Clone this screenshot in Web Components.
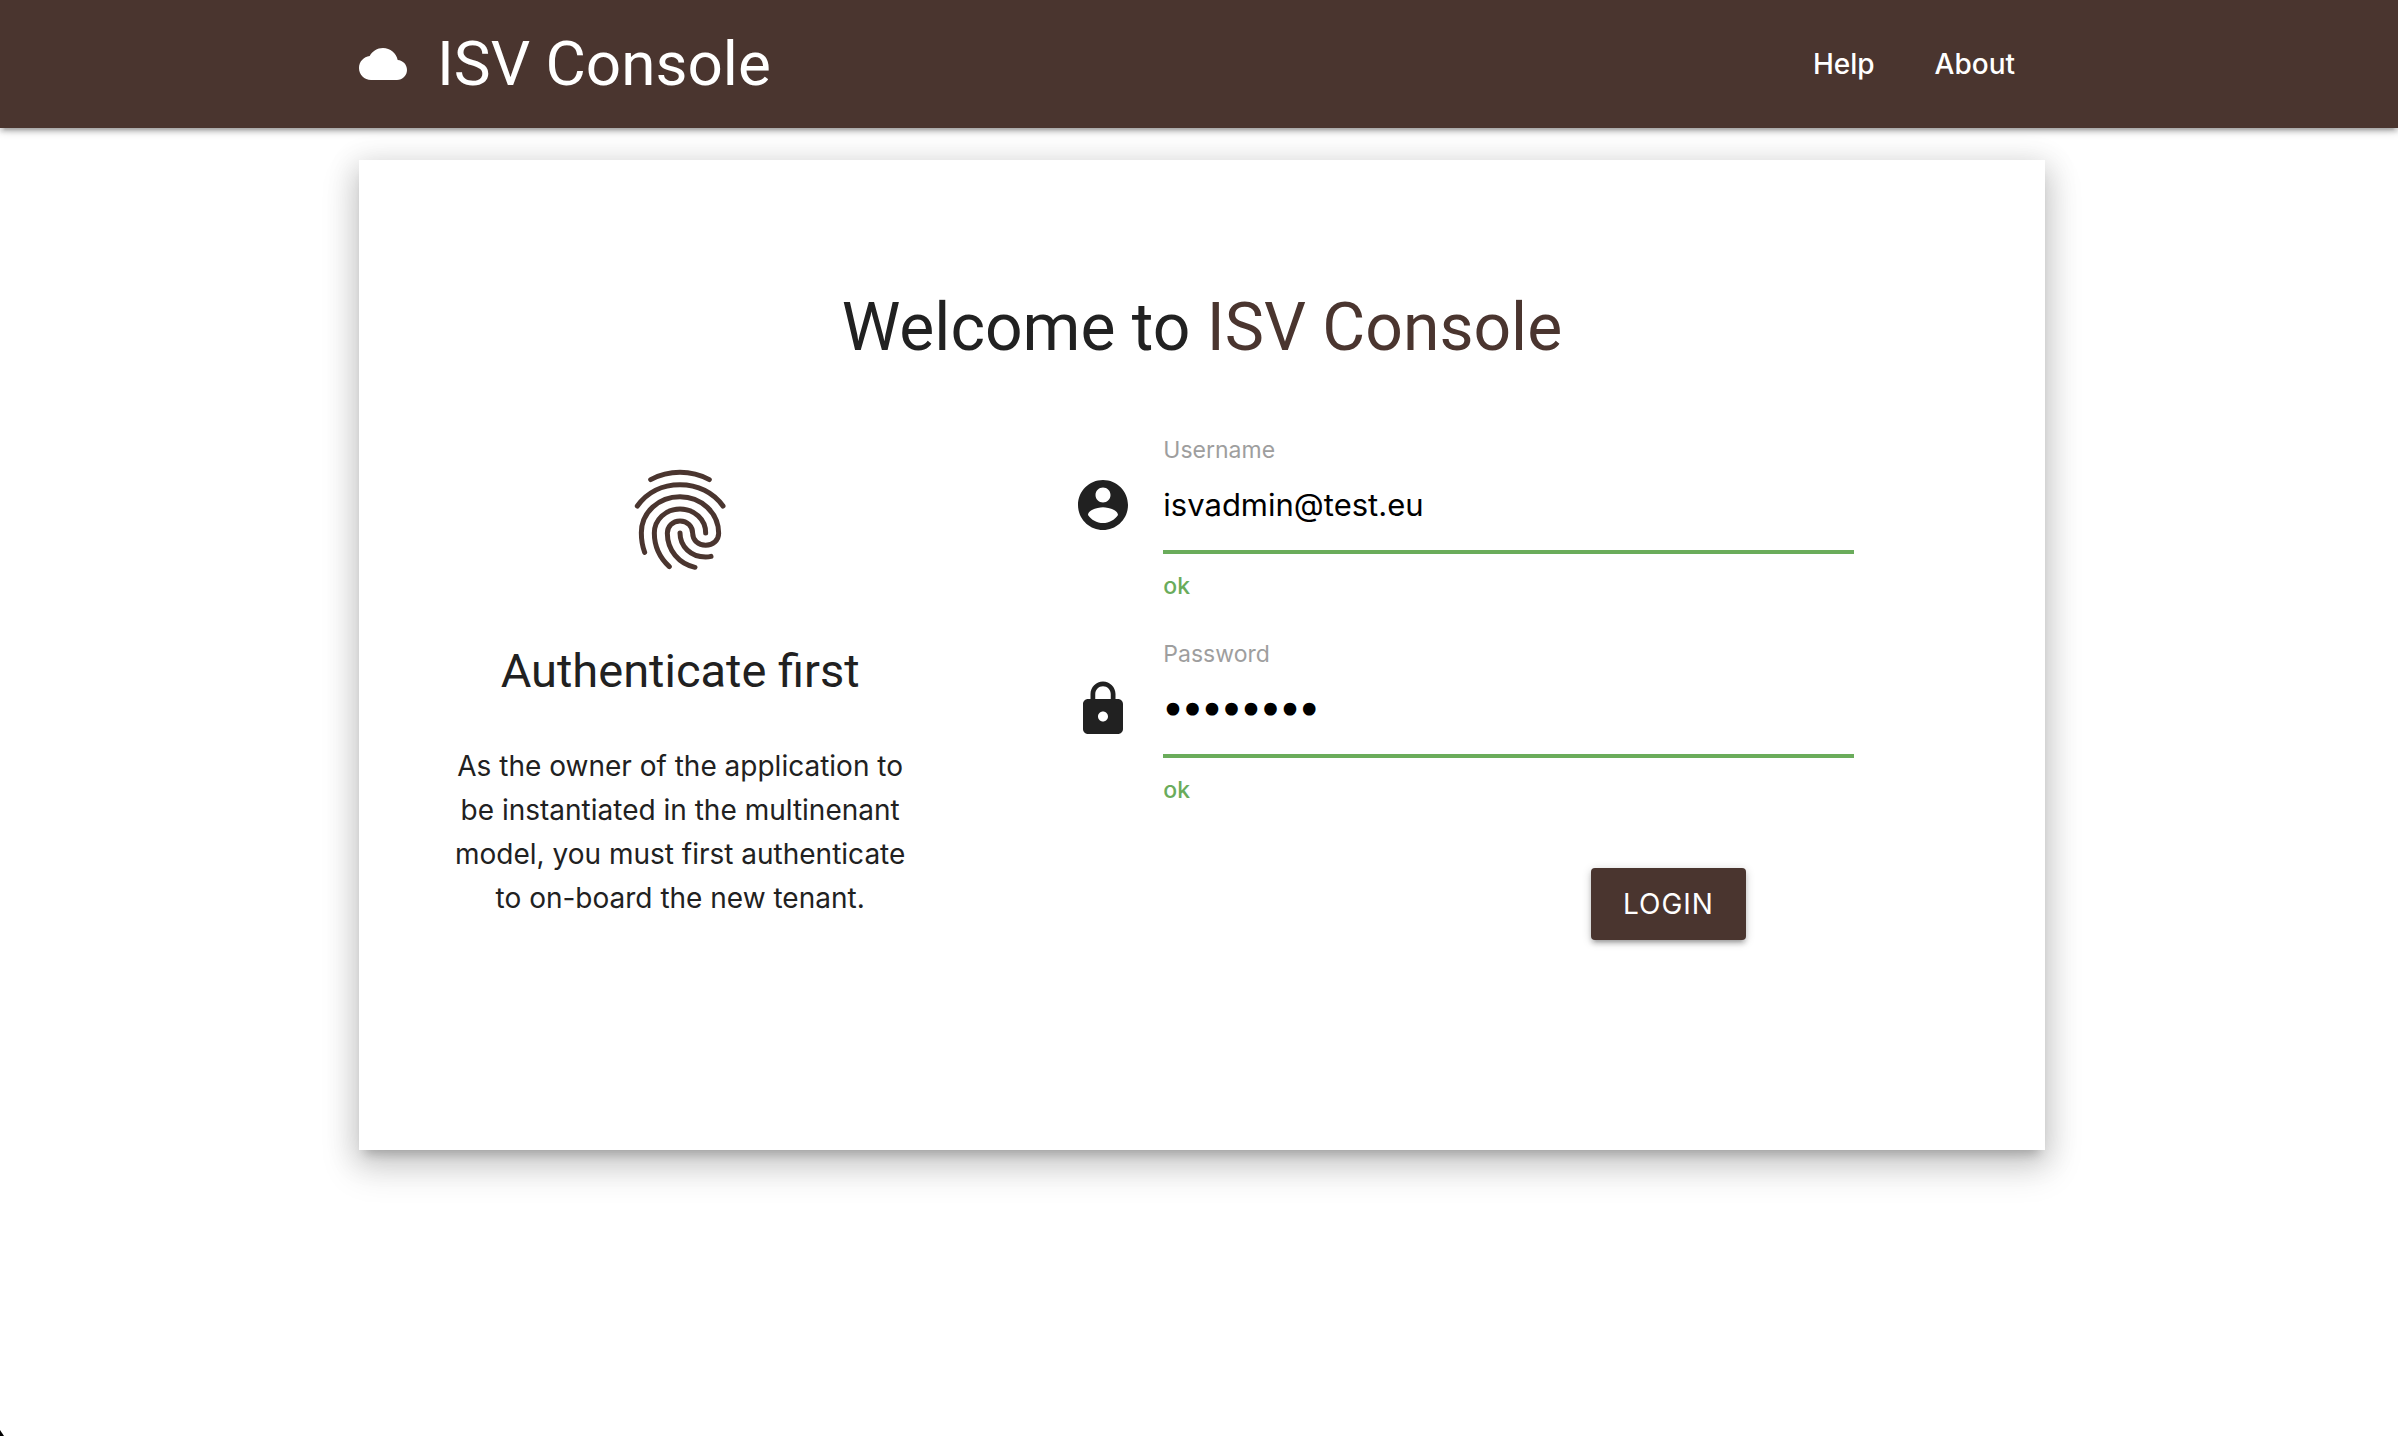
<!DOCTYPE html>
<html lang="en">
<head>
<meta charset="utf-8">
<title>ISV Console</title>
<style>
  :root { --brand: #4a352f; --ink: #212121; --ok: #6aac5b; --muted: #9e9e9e; --display: Roboto, "Liberation Sans", sans-serif; }
  body { margin: 0; min-height: 100vh; background: #fff; color: var(--ink); font-family: Inter, "Liberation Sans", sans-serif; font-size: 28px; line-height: 44px; }
</style>
</head>
<body>
<isv-app></isv-app>
<script>
const define = (name, html) => {
  const template = document.createElement('template');
  template.innerHTML = html;
  customElements.define(name, class extends HTMLElement {
    constructor() {
      super();
      this.attachShadow({ mode: 'open' }).append(template.content.cloneNode(true));
    }
  });
};

const ICONS = {
  cloud: '<path d="M19.35 10.04C18.67 6.59 15.64 4 12 4 9.11 4 6.6 5.64 5.35 8.04 2.34 8.36 0 10.91 0 14c0 3.31 2.69 6 6 6h13c2.76 0 5-2.24 5-5 0-2.64-2.05-4.78-4.65-4.96z"/>',
  account: '<path d="M12 2C6.48 2 2 6.48 2 12s4.48 10 10 10 10-4.48 10-10S17.52 2 12 2zm0 3c1.66 0 3 1.34 3 3s-1.34 3-3 3-3-1.34-3-3 1.34-3 3-3zm0 14.2c-2.5 0-4.71-1.28-6-3.22.03-1.99 4-3.08 6-3.08 1.99 0 5.97 1.09 6 3.08-1.29 1.94-3.5 3.22-6 3.22z"/>',
  lock: '<path d="M18 8h-1V6c0-2.76-2.24-5-5-5S7 3.24 7 6v2H6c-1.1 0-2 .9-2 2v10c0 1.1.9 2 2 2h12c1.1 0 2-.9 2-2V10c0-1.1-.9-2-2-2zm-6 9c-1.1 0-2-.9-2-2s.9-2 2-2 2 .9 2 2-.9 2-2 2zm3.1-9H8.9V6c0-1.71 1.39-3.1 3.1-3.1 1.71 0 3.1 1.39 3.1 3.1v2z"/>'
};

customElements.define('isv-icon', class extends HTMLElement {
  constructor() {
    super();
    this.attachShadow({ mode: 'open' });
  }
  connectedCallback() {
    this.shadowRoot.innerHTML = `<style>
      :host { display: block; flex: none; width: var(--icon-size, 60px); height: var(--icon-size, 60px); }
      svg { display: block; width: 100%; height: 100%; fill: currentColor; }
    </style><svg viewBox="0 0 24 24" aria-hidden="true">${ICONS[this.getAttribute('name')]}</svg>`;
  }
});

define('isv-fingerprint', `<style>
  :host { display: block; width: 92px; height: 104px; color: var(--brand); }
  svg { display: block; width: 100%; height: 100%; fill: none; stroke: currentColor; stroke-width: 15; stroke-linecap: round; }
</style>
<svg viewBox="102 84 276 312" aria-hidden="true">
  <path d="M152 119C180 104 208 97 240 97S300 104 328 119"/>
  <path d="M112 198C141 157 187 134 240 134S340 157 369 198"/>
  <path d="M134 337C127 318 124 299 124 278C124 217 176 170 240 170S356 219 356 280C356 301 339 316 317 316S278 301 278 280S262 243 240 243S202 259 202 280C202 331 237 372 285 382"/>
  <path d="M317 279C317 238 283 207 240 207S163 239 163 279C163 319 179 353 208 380"/>
  <path d="M240 279C240 320 273 351 317 351Q326 351 333 349"/>
</svg>`);

define('isv-nav-link', `<style>
  :host { display: block; }
  a { display: block; padding: 0 30px; color: inherit; font-size: 28px; font-weight: 500; line-height: 128px; text-decoration: none; }
</style><a href="#"><slot></slot></a>`);

define('isv-header', `<style>
  :host { display: block; background: var(--brand); color: #fff; box-shadow: 0 4px 4px rgba(0,0,0,.14), 0 6px 2px -4px rgba(0,0,0,.12), 0 2px 10px rgba(0,0,0,.2); }
  .bar { display: flex; justify-content: space-between; align-items: center; margin: 0 14.72% 0 14.97%; }
  .brand { display: flex; align-items: center; gap: 30px; color: inherit; text-decoration: none; font-family: var(--display); font-size: 62px; line-height: 128px; --icon-size: 48px; }
  nav { display: flex; }
</style>
<header class="bar">
  <a class="brand" href="#"><isv-icon name="cloud"></isv-icon><span>ISV Console</span></a>
  <nav><isv-nav-link>Help</isv-nav-link><isv-nav-link>About</isv-nav-link></nav>
</header>`);

customElements.define('isv-field', class extends HTMLElement {
  constructor() {
    super();
    this.attachShadow({ mode: 'open' });
  }
  connectedCallback() {
    const at = name => this.getAttribute(name);
    this.shadowRoot.innerHTML = `<style>
      :host { display: grid; grid-template-columns: 60px 1fr; column-gap: 30px; }
      label, .hint { grid-column: 2; font-size: 23px; line-height: 30px; }
      label { color: var(--muted); }
      .hint { color: var(--ok); font-weight: 500; }
      isv-icon { margin-top: 10px; }
      input { box-sizing: border-box; width: 100%; height: 89px; margin: 0 0 17px; padding: 0 0 6px; border: 0; border-bottom: 4px solid var(--ok); border-radius: 0; outline: 0; background: none; color: #000; font: inherit; font-size: 31px; }
      input[type=password] { padding: 0 0 2px; font-family: "DejaVu Sans", sans-serif; font-size: 33px; -webkit-text-stroke: 3px #000; }
    </style>
    <label for="control">${at('label')}</label>
    <isv-icon name="${at('icon')}"></isv-icon>
    <input id="control" type="${at('type')}" value="${at('value')}">
    <span class="hint">ok</span>`;
  }
});

define('isv-button', `<style>
  :host { display: block; }
  button { display: block; height: 72px; padding: 0 32px; border: 0; border-radius: 4px; background: var(--brand); color: #fff; font: inherit; font-size: 28px; letter-spacing: 1px; text-transform: uppercase; box-shadow: 0 4px 4px rgba(0,0,0,.14), 0 6px 2px -4px rgba(0,0,0,.12), 0 2px 10px rgba(0,0,0,.2); }
</style><button type="submit"><slot></slot></button>`);

define('isv-intro', `<style>
  :host { display: flex; flex-direction: column; align-items: center; text-align: center; }
  h2 { margin: 72px 0 46px; font-family: var(--display); font-size: 47px; font-weight: 400; line-height: 54px; }
  p { margin: 0; max-width: 460px; }
</style>
<isv-fingerprint></isv-fingerprint>
<h2><slot name="title"></slot></h2>
<p><slot></slot></p>`);

define('isv-login-card', `<style>
  :host { display: block; margin: 32px 14.72% 0 14.97%; padding: 126px 0 210px; background: #fff; box-shadow: 0 16px 34px 4px rgba(0,0,0,.14), 0 6px 28px 4px rgba(0,0,0,.12), 0 10px 10px -6px rgba(0,0,0,.2); }
  h1 { margin: 0 0 65px; text-align: center; font-family: var(--display); font-size: 66px; font-weight: 400; line-height: 84px; }
  h1 span { color: var(--brand); }
  .columns { display: grid; grid-template-columns: 38.1% 46.3%; column-gap: 72px; }
  isv-intro { padding-top: 33px; }
  form { display: flex; flex-direction: column; gap: 38px; }
  isv-button { align-self: flex-end; margin: 25px 108px 0 0; }
</style>
<h1>Welcome to <span>ISV Console</span></h1>
<div class="columns">
  <isv-intro>
    <span slot="title">Authenticate first</span>
    As the owner of the application to be instantiated in the multinenant model, you must first authenticate to on-board the new tenant.
  </isv-intro>
  <form>
    <isv-field label="Username" icon="account" type="text" value="isvadmin@test.eu"></isv-field>
    <isv-field label="Password" icon="lock" type="password" value="password"></isv-field>
    <isv-button>Login</isv-button>
  </form>
</div>`);

define('isv-app', `<style>
  :host { display: block; min-height: 100vh; }
  .corner { position: fixed; left: 0; bottom: 0; width: 4px; height: 6px; background: #000; clip-path: polygon(0 0, 100% 100%, 0 100%); }
</style>
<isv-header></isv-header>
<main><isv-login-card></isv-login-card></main>
<div class="corner"></div>`);
</script>
</body>
</html>
